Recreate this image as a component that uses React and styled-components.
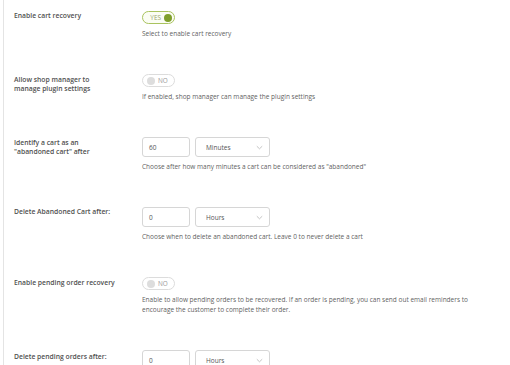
import styled, { createGlobalStyle } from "styled-components";

const GlobalStyle = createGlobalStyle`
  html, body {
    margin: 0;
    padding: 0;
    background: #ffffff;
    overflow: hidden;
  }
  body {
    font-family: "Open Sans", "Noto Sans", "Liberation Sans", sans-serif;
  }
`;

const Page = styled.div`
  margin-left: 3px;
  border-left: 1px solid #e4e4e4;
  min-height: 365px;
  padding-top: 11px;
  display: flex;
  flex-direction: column;
  gap: 35px;
`;

const Row = styled.div`
  display: flex;
  align-items: flex-start;
`;

const Label = styled.div`
  width: 138px;
  padding-left: 10px;
  padding-top: ${(p) => p.$offset || 0}px;
  box-sizing: border-box;
  font-size: 6.8px;
  line-height: 9px;
  font-weight: 600;
  color: #505050;
  flex-shrink: 0;
`;

const Field = styled.div`
  display: flex;
  flex-direction: column;
`;

const Controls = styled.div`
  display: flex;
  gap: 5px;
  align-items: center;
`;

const Desc = styled.p`
  margin: 5px 0 0;
  font-size: 6.5px;
  line-height: 10px;
  color: #5f5f5f;
  max-width: 330px;
`;

const Toggle = styled.div`
  width: 33px;
  height: 13px;
  box-sizing: border-box;
  border: 1px solid ${(p) => (p.$on ? "#a9c35e" : "#dcdcdc")};
  border-radius: 7px;
  background: ${(p) => (p.$on ? "#fbfdf4" : "#ffffff")};
  display: flex;
  align-items: center;
  flex-direction: ${(p) => (p.$on ? "row" : "row-reverse")};
  justify-content: flex-end;
  gap: 3px;
  padding: 0 2px 0 4px;
  font-size: 6.4px;
  color: ${(p) => (p.$on ? "#98a36f" : "#999999")};
`;

const Knob = styled.span`
  width: 8px;
  height: 8px;
  border-radius: 50%;
  background: ${(p) => (p.$on ? "#7f9f2c" : "#dddddd")};
`;

const NumberBox = styled.div`
  width: 48px;
  height: 20px;
  box-sizing: border-box;
  border: 1px solid #d6d6d6;
  border-radius: 3px;
  padding-left: 6px;
  display: flex;
  align-items: center;
  font-size: 6.5px;
  color: #555;
`;

const Select = styled.div`
  width: 75px;
  height: 20px;
  box-sizing: border-box;
  border: 1px solid #d6d6d6;
  border-radius: 3px;
  padding: 0 6px 0 10px;
  display: flex;
  align-items: center;
  justify-content: space-between;
  font-size: 6.5px;
  color: #555;
`;

const Chevron = () => (
  <svg width="7" height="5" viewBox="0 0 7 5">
    <path d="M0.8 1.2 L3.5 3.8 L6.2 1.2" fill="none" stroke="#b5b5b5" strokeWidth="0.8" />
  </svg>
);

function Switch({ on }) {
  return (
    <Toggle $on={on}>
      <span>{on ? "YES" : "NO"}</span>
      <Knob $on={on} />
    </Toggle>
  );
}

function Duration({ value, unit }) {
  return (
    <Controls>
      <NumberBox>{value}</NumberBox>
      <Select>
        {unit}
        <Chevron />
      </Select>
    </Controls>
  );
}

export default function App() {
  return (
    <>
      <GlobalStyle />
      <Page>
        <Row>
          <Label $offset={0}>Enable cart recovery</Label>
          <Field>
            <Switch on />
            <Desc>Select to enable cart recovery</Desc>
          </Field>
        </Row>
        <Row>
          <Label $offset={1}>
            Allow shop manager to
            <br />
            manage plugin settings
          </Label>
          <Field>
            <Switch />
            <Desc>If enabled, shop manager can manage the plugin settings</Desc>
          </Field>
        </Row>
        <Row>
          <Label $offset={1}>
            Identify a cart as an
            <br />
            "abandoned cart" after
          </Label>
          <Field>
            <Duration value="60" unit="Minutes" />
            <Desc>Choose after how many minutes a cart can be considered as "abandoned"</Desc>
          </Field>
        </Row>
        <Row>
          <Label $offset={0}>Delete Abandoned Cart after:</Label>
          <Field>
            <Duration value="0" unit="Hours" />
            <Desc>Choose when to delete an abandoned cart. Leave 0 to never delete a cart</Desc>
          </Field>
        </Row>
        <Row>
          <Label $offset={1}>Enable pending order recovery</Label>
          <Field>
            <Switch />
            <Desc>
              Enable to allow pending orders to be recovered. If an order is pending, you can send out email reminders to
              encourage the customer to complete their order.
            </Desc>
          </Field>
        </Row>
        <Row>
          <Label $offset={2}>Delete pending orders after:</Label>
          <Field>
            <Duration value="0" unit="Hours" />
          </Field>
        </Row>
      </Page>
    </>
  );
}
